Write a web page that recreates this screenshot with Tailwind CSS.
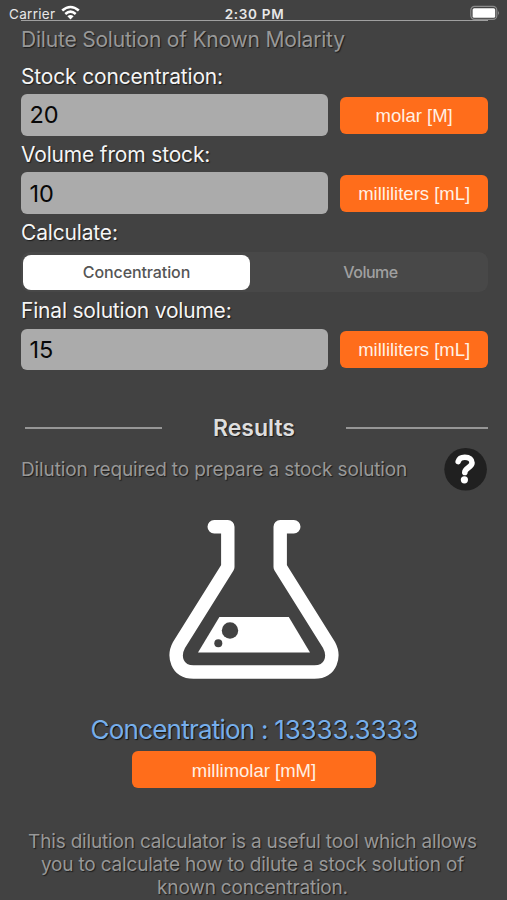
<!DOCTYPE html>
<html lang="en">
<head>
<meta charset="utf-8">
<title>Dilution calculator</title>
<script src="https://cdn.jsdelivr.net/npm/@tailwindcss/browser@4"></script>
</head>
<body class="w-[507px] h-[900px] overflow-hidden bg-[#424242] font-['Inter','Liberation_Sans',sans-serif] whitespace-nowrap">
<header class="h-[20px] pt-[4px] pl-[9px] pr-[7px] grid grid-cols-[1fr_auto_1fr] items-start text-[13.5px] leading-[20px] text-[#e8e8e8]">
  <div class="flex items-start gap-[6px]">
    <span class="tracking-[0.3px]">Carrier</span>
    <svg class="mt-[1px]" width="19" height="15" viewBox="0 0 19 15" fill="none" stroke="#fff" stroke-width="2.6"><path d="M1.2 5.6Q9.5-1.6 17.8 5.6M4.3 8.9Q9.5 4.5 14.7 8.9"/><path d="M6.4 11.2Q9.5 8.6 12.6 11.2L9.5 14.4Z" fill="#fff" stroke="none"/></svg>
  </div>
  <span class="font-semibold tracking-[0.7px]">2:30 PM</span>
  <svg class="justify-self-end mt-[1px]" width="30" height="15" viewBox="0 0 30 15"><rect x=".8" y="1.4" width="26" height="13" rx="3.8" fill="none" stroke="#8b8b8b" stroke-width="1.2"/><rect x="2.6" y="3.2" width="22.6" height="9.6" rx="1.6" fill="#fff"/><path d="M28 6Q30 8 28 10Z" fill="#8b8b8b"/></svg>
</header>
<main class="pl-[21px] pr-[19px]">
  <div class="h-[1px] bg-[#a0a0a0]"></div>
  <h1 class="h-[38px] leading-[37px] text-[21px] tracking-[-0.2px] text-[#989898] [text-shadow:1px_1px_1px_#1c1c1c]">Dilute Solution of Known Molarity</h1>

  <label class="block h-[35px] leading-[35px] text-[21px] tracking-[-0.17px] text-[#f5f5f5] [text-shadow:1px_1px_1px_#1c1c1c]">Stock concentration:</label>
  <div class="flex items-center gap-[12px] h-[42px]">
    <div class="w-[308px] h-[42px] rounded-[6px] bg-[#ababab] pl-[8.5px] text-[23.5px] leading-[42px] text-[#080808]">20</div>
    <button class="w-[148px] h-[37px] pt-[2px] rounded-[6px] bg-[#ff6d1b] text-[18.5px] text-[#fff0e4] font-['Liberation_Sans',sans-serif]">molar [M]</button>
  </div>

  <label class="block h-[36px] leading-[37px] text-[21px] tracking-[-0.17px] text-[#f5f5f5] [text-shadow:1px_1px_1px_#1c1c1c]">Volume from stock:</label>
  <div class="flex items-center gap-[12px] h-[42px]">
    <div class="w-[308px] h-[42px] rounded-[6px] bg-[#ababab] pl-[8.5px] text-[23.5px] leading-[43px] text-[#080808]">10</div>
    <button class="w-[148px] h-[37px] pt-[2px] rounded-[6px] bg-[#ff6d1b] text-[18.5px] text-[#fff0e4] font-['Liberation_Sans',sans-serif]">milliliters [mL]</button>
  </div>

  <label class="block h-[38px] leading-[37px] text-[21px] tracking-[-0.17px] text-[#f5f5f5] [text-shadow:1px_1px_1px_#1c1c1c]">Calculate:</label>
  <div class="h-[40px] rounded-[9px] bg-[#484848] flex items-center pl-[2px] text-[16px] font-medium">
    <div class="w-[227px] h-[35px] rounded-[8px] bg-white text-[#555] text-center leading-[34px] tracking-[-0.1px]">Concentration</div>
    <div class="flex-1 pl-[3px] text-[#a0a0a0] text-center leading-[34px] tracking-[-0.5px]">Volume</div>
  </div>

  <label class="block h-[37px] leading-[37px] text-[21px] tracking-[-0.2px] text-[#f5f5f5] [text-shadow:1px_1px_1px_#1c1c1c]">Final solution volume:</label>
  <div class="flex items-center gap-[12px] h-[41px]">
    <div class="w-[308px] h-[41px] rounded-[6px] bg-[#ababab] pl-[8.5px] text-[23.5px] leading-[42px] text-[#080808]">15</div>
    <button class="w-[148px] h-[37px] pt-[1px] rounded-[6px] bg-[#ff6d1b] text-[18.5px] text-[#fff0e4] font-['Liberation_Sans',sans-serif]">milliliters [mL]</button>
  </div>

  <section class="mt-[38px]">
    <div class="h-[40px] flex items-center justify-between pl-[4px]">
      <div class="w-[137px] h-[2px] bg-[#969696]"></div>
      <h2 class="text-[23px] leading-[40px] font-semibold text-[#dedede] [text-shadow:1px_1px_1px_#1c1c1c]">Results</h2>
      <div class="w-[142px] h-[2px] bg-[#969696]"></div>
    </div>
    <div class="h-[43px] flex items-center justify-between">
      <p class="pt-[2px] text-[19px] tracking-[-0.13px] text-[#989898] [text-shadow:1px_1px_1px_#1c1c1c]">Dilution required to prepare a stock solution</p>
      <svg width="44" height="43" viewBox="0 0 44 43"><circle cx="21.6" cy="21.3" r="21.3" fill="#202020"/><path d="M14.2 13.6Q15.4 9.2 20.8 9.2C25.6 9.2 28 11.6 28 14.8C28 19.6 20.8 19.6 20.8 24.4" fill="none" stroke="#fff" stroke-width="5.6" stroke-linecap="round"/><circle cx="20.4" cy="31.8" r="3.6" fill="#fff"/></svg>
    </div>
    <svg class="ml-[148px] mt-[28px]" width="170" height="160" viewBox="169 519 170 160"><path d="M214.2 526.8H227.8V567L179 645C173 656 176.5 672 193.5 672H314.5C331.5 672 335 656 329 645L280.2 567V526.8H293.8" fill="none" stroke="#fff" stroke-width="13.4" stroke-linejoin="round" stroke-linecap="round"/><path d="M219.4 617H288.8L310 652.5H198Z" fill="#fff"/><circle cx="230" cy="630.5" r="8.2" fill="#424242"/><circle cx="218.3" cy="643.3" r="4" fill="#424242"/></svg>
    <p class="mt-[30px] h-[42px] leading-[41px] text-center text-[26px] tracking-[-0.78px] text-[#76aeeb] [text-shadow:1px_1px_1px_#111]">Concentration : <span class="tracking-[-0.1px]">13333.3333</span></p>
    <button class="block ml-[111px] w-[244px] h-[37px] pt-[2px] rounded-[6px] bg-[#ff6d1b] text-[18.5px] text-[#fff0e4] font-['Liberation_Sans',sans-serif]">millimolar [mM]</button>
    <p class="mt-[42px] -ml-[14px] -mr-[10px] text-center leading-[23.2px] text-[19px] tracking-[-0.18px] text-[#989898] [text-shadow:1px_1px_1px_#1c1c1c]">This dilution calculator is a useful tool which allows<br>you to calculate how to dilute a stock solution of<br>known concentration.</p>
  </section>
</main>
</body>
</html>
